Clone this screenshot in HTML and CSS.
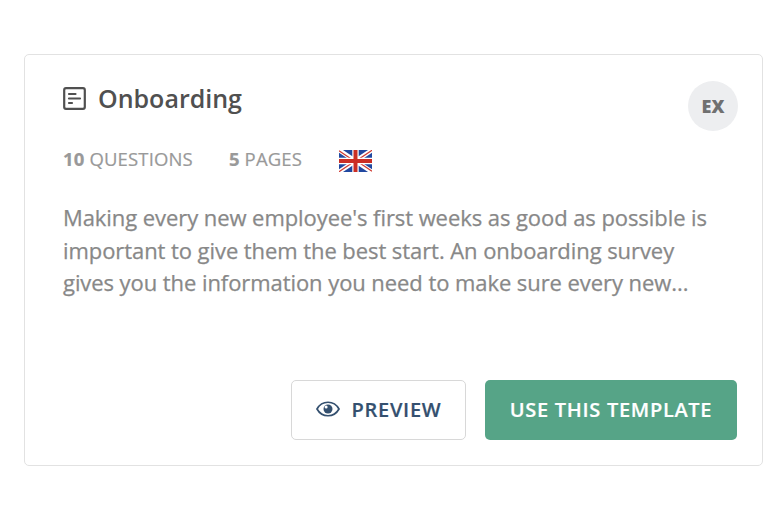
FILE: index.html
```html
<!DOCTYPE html>
<html lang="en">
<head>
  <meta charset="UTF-8">
  <meta name="viewport" content="width=device-width, initial-scale=1.0">
  <title>Onboarding</title>
  <link rel="stylesheet" href="styles.css">
</head>
<body>
  <article class="card">
    <header class="card-header">
      <div class="card-title">
        <svg class="icon-survey" viewBox="0 0 23 23" fill="none" stroke="currentColor" stroke-width="2.2">
          <rect x="1.2" y="1.2" width="20.6" height="20.6" rx="1.8"/>
          <path d="M6 7H12.5M6 11.5H17M6 16H9" stroke-linecap="round"/>
        </svg>
        <h2>Onboarding</h2>
      </div>
      <span class="badge">EX</span>
    </header>
    <div class="meta">
      <span class="questions"><b>10</b> QUESTIONS</span>
      <span class="pages"><b>5</b> PAGES</span>
      <svg class="flag" viewBox="0 0 33 22">
        <rect width="33" height="22" fill="#2148a0"/>
        <path d="M0 0L33 22M33 0L0 22" stroke="#fff" stroke-width="4.4"/>
        <path d="M0 .8L16 11.5M33 21.2L17 10.5M33 .3L17 11M0 21.7L16 11" stroke="#cf3a32" stroke-width="1.3"/>
        <path d="M16.5 0V22M0 11H33" stroke="#fff" stroke-width="6.4"/>
        <path d="M16.5 0V22M0 11H33" stroke="#cb2e25" stroke-width="4"/>
      </svg>
    </div>
    <p class="description">
      Making every new employee's first weeks as good as possible is<br>
      important to give them the best start. An onboarding survey<br>
      gives you the information you need to make sure every new...
    </p>
    <footer class="actions">
      <button class="btn btn-preview">
        <svg class="icon-eye" viewBox="0 0 24 16">
          <path d="M1 8C6-1 18-1 23 8C18 17 6 17 1 8Z" fill="none" stroke="currentColor" stroke-width="1.7"/>
          <circle cx="12" cy="8" r="4.5" fill="currentColor"/>
          <circle cx="10.1" cy="6.1" r="1.5" fill="#fff"/>
        </svg>
        PREVIEW
      </button>
      <button class="btn btn-use">USE THIS TEMPLATE</button>
    </footer>
  </article>
</body>
</html>
```
FILE: styles.css
```css
* {
  box-sizing: border-box;
  margin: 0;
  padding: 0;
}
body {
  font-family: "Open Sans", sans-serif;
  background: #fff;
  color: #888;
  padding: 54px 5px 0 24px;
}
.card {
  display: flex;
  flex-direction: column;
  height: 412px;
  border: 1px solid #e2e2e2;
  border-radius: 5px;
  padding: 26px 24px 25px 38px;
}
.card-header {
  display: flex;
  justify-content: space-between;
  height: 50px;
}
.card-title {
  display: flex;
  align-items: center;
  height: 34px;
  gap: 12px;
  color: #505050;
}
.card-title h2 {
  font-size: 25px;
  font-weight: 600;
  line-height: 34px;
}
.icon-survey {
  width: 23px;
  height: 23px;
}
.badge {
  width: 50px;
  height: 50px;
  border-radius: 50%;
  background: #edeef0;
  color: #707070;
  font-size: 18px;
  font-weight: 800;
  line-height: 50px;
  text-align: center;
}
.meta {
  display: flex;
  align-items: center;
  height: 30px;
  margin-top: 12px;
  font-size: 18.5px;
  letter-spacing: 0.15px;
  color: #999;
  -webkit-text-stroke: 0.2px;
}
.pages {
  margin: 0 37px 0 36px;
}
.flag {
  width: 33px;
  height: 22px;
  margin-top: 5px;
}
.description {
  margin-top: 28px;
  font-size: 22px;
  line-height: 32.5px;
  letter-spacing: -0.07px;
  white-space: nowrap;
  -webkit-text-stroke: 0.25px;
}
.actions {
  display: flex;
  justify-content: flex-end;
  gap: 19px;
  margin-top: auto;
  margin-right: 1px;
}
.btn {
  display: flex;
  align-items: center;
  justify-content: center;
  height: 60px;
  border: none;
  border-radius: 5px;
  padding-bottom: 2px;
  font-family: inherit;
  font-size: 20px;
  font-weight: 600;
  letter-spacing: 0.7px;
  white-space: nowrap;
  -webkit-text-stroke: 0.2px;
}
.btn-preview {
  width: 175px;
  gap: 12px;
  border: 1px solid #d8d8d8;
  background: #fff;
  color: #34506f;
}
.btn-use {
  width: 252px;
  background: #56a487;
  color: #fff;
}
.icon-eye {
  width: 24px;
  height: 16px;
}
```
